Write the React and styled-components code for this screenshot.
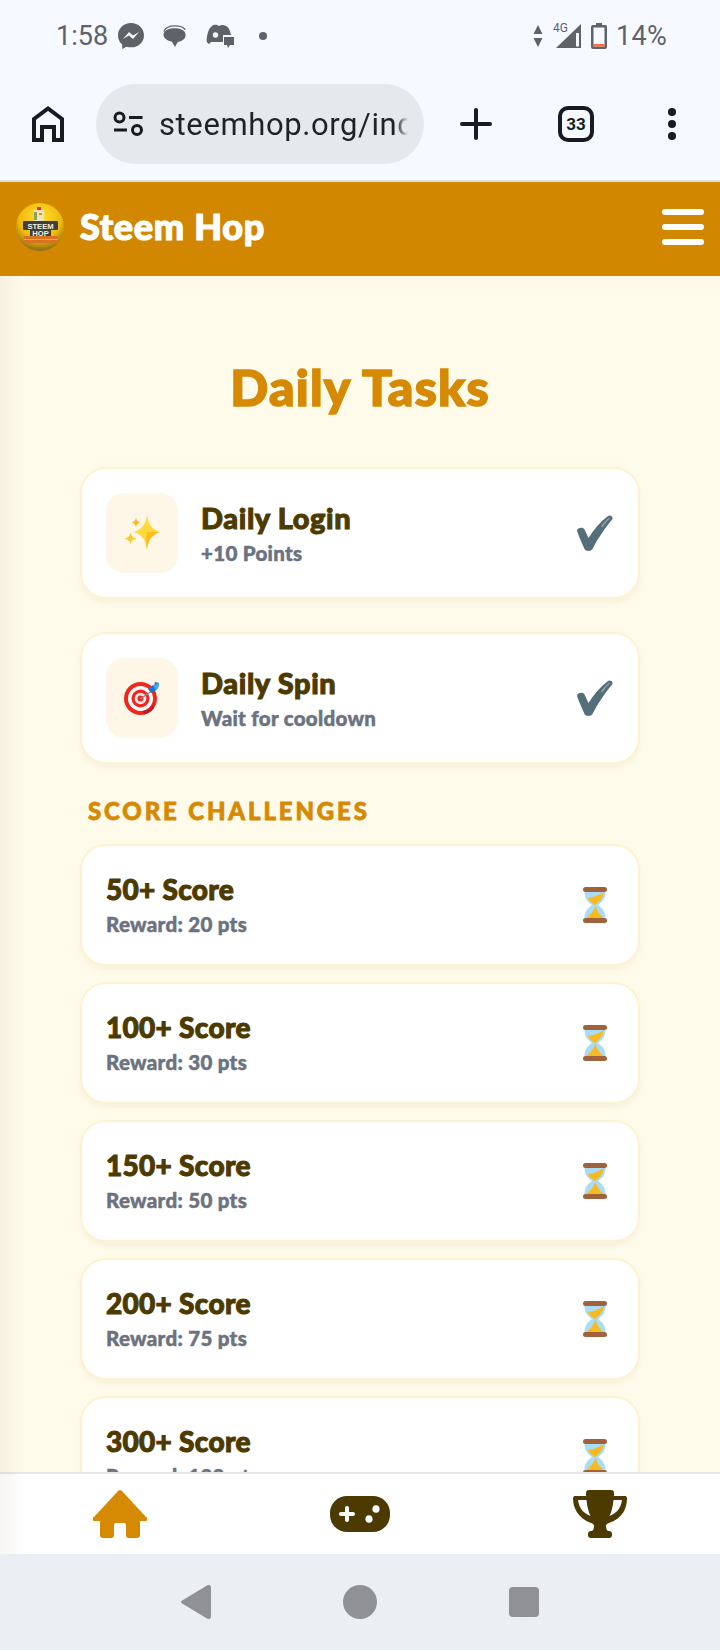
import React from "react";
import styled, { createGlobalStyle } from "styled-components";

const Global = createGlobalStyle`
  html, body { margin: 0; padding: 0; background: #F6F9FF; }
  * { box-sizing: border-box; }
`;

const Phone = styled.div`
  width: 720px; height: 1650px; display: flex; flex-direction: column; overflow: hidden;
  font-family: Lato, "Liberation Sans", sans-serif;
`;
const Chrome = styled.div`
  height: 182px; background: #F6F9FF; border-bottom: 2px solid #DEE1E6; flex: none;
  display: flex; flex-direction: column;
`;
const StatusBar = styled.div`
  height: 72px; padding: 0 53px 0 56px; display: flex; align-items: center; justify-content: space-between;
  color: #5F6368; font: 400 27px Roboto, sans-serif;
`;
const StatusGroup = styled.div`
  display: flex; align-items: center; gap: ${p => p.$gap || 0}px; margin-left: ${p => p.$inset || 0}px;
`;
const Toolbar = styled.div`
  display: flex; align-items: center; height: 80px; margin-top: 12px; padding-left: 32px;
`;
const Pill = styled.div`
  width: 328px; height: 80px; margin-left: 32px; border-radius: 40px; background: #E5E8ED;
  display: flex; align-items: center; padding: 0 16px 0 17px; gap: 14px; flex: none; margin-right: 36px;
`;
const Url = styled.div`
  flex: 1; overflow: hidden; white-space: nowrap; font: 400 31px Roboto, sans-serif; letter-spacing: 0.6px; color: #1F2327;
  -webkit-mask-image: linear-gradient(to right, #000 95%, transparent);
  mask-image: linear-gradient(to right, #000 95%, transparent);
`;
const TabCount = styled.div`
  width: 36px; height: 36px; border: 4px solid #171C20; border-radius: 10px; margin-left: 66px;
  display: flex; align-items: center; justify-content: center;
  font: 700 17px Roboto, sans-serif; color: #171C20;
`;
const Dots = styled.div`
  margin-left: 74px; display: grid; gap: 4px;
  span { width: 8px; height: 8px; border-radius: 50%; background: #171C20; display: block; }
`;
const Header = styled.header`
  height: 94px; flex: none; background: #D18800; display: flex; align-items: center;
  justify-content: space-between; padding: 0 16px 4px 16px;
`;
const Brand = styled.div`display: flex; align-items: center; gap: 16px;`;
const BrandName = styled.div`
  color: #fff; font-size: 36px; font-weight: 900; -webkit-text-stroke: 1.2px #fff; letter-spacing: 0.7px; margin-bottom: 2px;
`;
const Burger = styled.div`
  display: grid; gap: 9px;
  span { display: block; width: 42px; height: 6px; background: #fff; border-radius: 3px; }
`;
const Stage = styled.div`
  position: relative; flex: 1; min-height: 0; display: flex; flex-direction: column;
  &::after {
    content: ""; position: absolute; left: 0; top: 0; bottom: 0; width: 26px; pointer-events: none;
    background: linear-gradient(to right, rgba(90,70,20,.055), rgba(90,70,20,0));
  }
`;
const Main = styled.main`
  flex: 1; min-height: 0; overflow: hidden; background: #FFFBEB; padding: 0 80px;
`;
const Title = styled.h1`
  margin: 81px 0 0; text-align: center; color: #D68A03; font-size: 50px; line-height: 60px; font-weight: 900;
  -webkit-text-stroke: 1.6px #D68A03; letter-spacing: 1.2px;
`;
const Card = styled.div`
  background: #fff; border: 2px solid #FEF3D0; border-radius: 26px;
  box-shadow: 0 4px 6px rgba(120,90,20,.06);
  padding: 0 25px 0 24px; display: flex; align-items: center; justify-content: space-between;
  height: ${p => p.$tall ? 132 : 122}px;
  margin-top: ${p => p.$gap}px;
`;
const Left = styled.div`display: flex; align-items: center; gap: 23px;`;
const IconBox = styled.div`
  width: 72px; height: 80px; border-radius: 18px; background: #FEF7E8;
  display: flex; align-items: center; justify-content: center;
`;
const Texts = styled.div`
  display: flex; flex-direction: column; gap: 3px; margin-top: ${p => p.$lift ? -4 : -2}px;
`;
const Name = styled.div`
  color: #4D3A00; font-size: ${p => p.$compact ? 28 : 29}px; line-height: 38px; font-weight: 900;
  letter-spacing: ${p => p.$compact ? 0.3 : 0.6}px; -webkit-text-stroke: 1px #4D3A00;
`;
const Sub = styled.div`
  color: #6B7280; font-size: 20.5px; line-height: 26px; font-weight: 900; letter-spacing: 0.3px;
  -webkit-text-stroke: 0.5px #6B7280;
`;
const Trail = styled.div`width: 36px; display: flex; justify-content: center;`;
const Section = styled.div`
  margin: 35px 0 0 8px; height: 24px; line-height: 24px; font-size: 24px; font-weight: 900; color: #D68A03;
  letter-spacing: 2.85px; -webkit-text-stroke: 0.8px #D68A03; text-transform: uppercase;
`;
const BottomNav = styled.nav`
  height: 82px; flex: none; background: #fff; border-top: 2px solid #E5E7EB;
  display: grid; grid-template-columns: repeat(3, 1fr); align-items: center; justify-items: center;
`;
const SystemNav = styled.div`
  height: 96px; flex: none; background: #EBEEF3; display: grid;
  grid-template-columns: repeat(3, 164px); justify-content: center; align-items: center; justify-items: center;
`;
const Dot = styled.span`
  width: 8px; height: 8px; border-radius: 50%; background: #5F6368; margin-left: 25px;
`;
const NetBlock = styled.div`
  position: relative; width: 28px; height: 25px; margin: 0 10px; display: flex; justify-content: flex-end;
`;
const NetLabel = styled.span`
  position: absolute; left: 0; top: -3px; font: 400 12px Roboto, sans-serif; color: #5F6368;
`;
const Pct = styled.span`margin-left: 9px; letter-spacing: 0.3px;`;
const Circle = styled.div`width: 34px; height: 34px; border-radius: 50%; background: #8F9194;`;
const Square = styled.div`width: 30px; height: 30px; border-radius: 4px; background: #8F9194;`;
const LogoText = styled.text`
  fill: #F4EFD8; font-family: "Liberation Sans", sans-serif; font-weight: 700; text-anchor: middle; font-size: 7.6px;
`;

const Messenger = () => (
  <svg width="26" height="27" viewBox="0 0 26 27"><path fill="#5F6368" d="M13 0C5.800 0 0 5.400 0 12.400c0 3.700 1.600 6.800 4.200 9V26l4.200-2.300c1.400.4 3 .6 4.600.6 7.200 0 13-5 13-11.900S20.200 0 13 0z"/><path fill="#F6F9FF" d="M5 16l6-7 4 3.500L21 9l-6 7-4-3.500z"/></svg>
);
const Bubbles = () => (
  <svg width="24" height="25" viewBox="0 0 26 25"><path fill="none" stroke="#5F6368" strokeWidth="1.500" d="M1 7C3 2 8 1 13 1c5 0 9 1 11 4"/><path fill="#5F6368" d="M12.500 3.500C18 3.500 24.500 5 24.500 11c0 5-5 7-8.500 7.500L13 24l-3.500-6C5 17 .5 14.500.5 10.500c0-5 6.500-7 12-7z"/></svg>
);
const Discord = () => (
  <svg width="28" height="24" viewBox="0 0 28 24"><path fill="#5F6368" d="M6 2c3-2 5-1 7 0 2-1 4-1.500 7 0 3 1 4 5 5 9h-8v7H5l-2 2c-2-1-3-3-2-7 .5-4 2-9 5-11z"/><circle cx="9.500" cy="11" r="2.700" fill="#F6F9FF"/><path fill="#5F6368" d="M18 13h10v8h-4l-2 3-1-3h-3z"/></svg>
);
const Signal = () => (
  <svg width="25" height="24" viewBox="0 0 25 24"><path fill="#5F6368" d="M25 0v24H0z"/><path fill="#F6F9FF" d="M20 9h3v13.500h-3z"/></svg>
);
const Arrows = () => (
  <svg width="10" height="22" viewBox="0 0 10 22"><path fill="#5F6368" d="M5 0l4.500 9H.5zM5 22L.5 13h9z"/></svg>
);
const Battery = () => (
  <svg width="16" height="26" viewBox="0 0 16 26"><path fill="#5F6368" d="M5 0h6v2h3a2 2 0 0 1 2 2v20a2 2 0 0 1-2 2H2a2 2 0 0 1-2-2V4a2 2 0 0 1 2-2h3z"/><rect x="2.500" y="4.500" width="11" height="19" fill="#F6F9FF"/><rect x="2.500" y="21" width="11" height="2.500" fill="#FF6B35"/></svg>
);
const HomeOutline = () => (
  <svg width="32" height="36" viewBox="0 0 32 36" fill="none" stroke="#171C20" strokeWidth="4"><path d="M2 34V13L16 2.500 30 13v21h-8V21H10v13z"/></svg>
);
const SiteTune = () => (
  <svg width="32" height="26" viewBox="0 0 32 26" fill="none" stroke="#171C20" strokeWidth="3"><circle cx="6.500" cy="6.500" r="4.500"/><path d="M16 6.500h13.500M1 19h13"/><circle cx="24" cy="19" r="4.500"/></svg>
);
const Plus = () => (
  <svg width="32" height="32" viewBox="0 0 32 32" stroke="#171C20" strokeWidth="4" strokeLinecap="round"><path d="M2 16h28M16 2v28"/></svg>
);
const Logo = () => (
  <svg width="48" height="48" viewBox="0 0 48 48">
    <defs><radialGradient id="lg" cx="50%" cy="32%" r="68%"><stop offset="0" stopColor="#FFE033"/><stop offset=".65" stopColor="#F0B90B"/><stop offset="1" stopColor="#8E6A18"/></radialGradient></defs>
    <circle cx="24" cy="24" r="24" fill="url(#lg)"/>
    <rect x="18" y="7" width="10" height="11" fill="#EFE3BC"/><rect x="18" y="9" width="3" height="8" fill="#8FA25A"/><rect x="21" y="4" width="4" height="3" fill="#D9342B"/><rect x="23" y="10" width="3" height="2" fill="#E58A1E"/>
    <rect x="7" y="18" width="35" height="9" rx="1" fill="#3F3F3C"/><rect x="14" y="26" width="21" height="8" fill="#3F3F3C"/>
    <rect x="8" y="33" width="34" height="7" rx="1" fill="#D9741E"/>
    <path d="M8 36.500h34" stroke="#F5A33B" strokeWidth="1"/>
    <LogoText x="24.500" y="25.500">STEEM</LogoText>
    <LogoText x="24.500" y="33">HOP</LogoText>
  </svg>
);
const Sparkles = () => (
  <svg width="36" height="36" viewBox="0 0 36 36">
    <path fill="#FFD93B" d="M23 0c1.500 9 4 13.500 13 17-9 3.500-11.500 8-13 18-1.500-10-4-14.500-13-18 9-3.500 11.500-8 13-17z"/>
    <path fill="#F9B31D" d="M23 35c-1-9-1-15 0-18 3 0 8 0 13 0-9 3.500-11.500 8-13 18z" opacity=".75"/>
    <path fill="#FBB91F" d="M12 2c.4 3.500 1.500 4.800 4.500 5.500-3 .8-4.100 2-4.500 5.500-.4-3.500-1.500-4.700-4.500-5.500 3-.7 4.100-2 4.500-5.500z"/>
    <path fill="#FDC82B" d="M6.500 17c.5 4 2 5.500 6 6.500-4 1-5.500 2.500-6 6.500-.5-4-2-5.500-6-6.500 4-1 5.500-2.500 6-6.500z"/>
  </svg>
);
const Target = () => (
  <svg width="36" height="34" viewBox="0 0 36 34">
    <circle cx="16.500" cy="17.500" r="16.500" fill="#F4261C"/>
    <circle cx="16.500" cy="17.500" r="12.500" fill="#fff"/>
    <circle cx="16.500" cy="17.500" r="9" fill="#F4261C"/>
    <circle cx="16.500" cy="17.500" r="5.800" fill="#F3ECEC"/>
    <circle cx="16.500" cy="17.500" r="3" fill="#F4261C"/>
    <path d="M30 27a16.500 16.500 0 0 1-10 6.500l-1-3.500c5-1 9-3 10.500-7z" fill="#B71C2C"/>
    <path stroke="#78909C" strokeWidth="1.500" d="M16 18l12-8"/>
    <path fill="#1976D2" d="M24 8l5-4 1 1 1-4 4 1-1 5-3 3-4 2z"/>
    <path fill="#42A5F5" d="M30 5l3-3 2 1-1 4-3 2z"/>
  </svg>
);
const Check = () => (
  <svg width="36" height="36" viewBox="0 0 36 36">
    <path fill="#546E7A" d="M0 16c0-3 6-4.500 7.500-1.500L11.500 23C17 14.500 23 7 31 1c2-1.500 5 .5 4.500 3C28 13 20.500 24 15.500 34c-1.500 2.500-7 2.500-8 0C5 28 2 22 0 16z"/>
    <path stroke="#90A4AE" strokeWidth="1.500" strokeLinecap="round" d="M32 3.500c-2.500 2-5 5-7 8"/>
  </svg>
);
const Hourglass = () => (
  <svg width="26" height="36" viewBox="0 0 26 36">
    <path fill="#A9DCF6" d="M2.500 4h21c0 7-2 10-7.500 14 5.500 4 7.500 7 7.500 14h-21c0-7 2-10 7.500-14C4.500 14 2.500 11 2.500 4z"/>
    <path fill="#F9B920" d="M6 11c6-.5 11-3 16-6-1 6-4 9-7.500 12l-1 1h-1C9.500 15.500 7 14 6 11zM13 19l1 1c1 5 5 8 8 12H4c3-4 8-7 9-13z"/>
    <rect x="1" y="0" width="24" height="5" rx="2.500" fill="#A0623B"/><rect x="1" y="31" width="24" height="5" rx="2.500" fill="#A0623B"/>
  </svg>
);
const HouseFill = () => (
  <svg width="54" height="48" viewBox="0 0 54 48">
    <path fill="#D68A03" d="M25 1a3 3 0 0 1 4 0l24 26a2 2 0 0 1-1.500 4H47v14a3 3 0 0 1-3 3h-8a3 3 0 0 1-3-3V35a2 2 0 0 0-2-2h-8a2 2 0 0 0-2 2v10a3 3 0 0 1-3 3h-8a3 3 0 0 1-3-3V31H2.500A2 2 0 0 1 1 27z"/>
  </svg>
);
const Gamepad = () => (
  <svg width="60" height="36" viewBox="0 0 60 36">
    <rect width="60" height="36" rx="17" fill="#4D3A00"/>
    <path stroke="#fff" strokeWidth="4" strokeLinecap="round" d="M11 18h12M17 12v12"/>
    <ellipse cx="46" cy="13" rx="3.600" ry="3.800" fill="#fff"/><ellipse cx="39" cy="23" rx="3.600" ry="3.800" fill="#fff"/>
  </svg>
);
const Trophy = () => (
  <svg width="54" height="48" viewBox="0 0 54 48">
    <path fill="#4D3A00" d="M13 3a3 3 0 0 1 3-3h22a3 3 0 0 1 3 3v3h12l1 2c0 10-4 20-18 25-2 .7-3 1.500-3 3 0 3 1 5 3 5a3 3 0 0 1 3 3v1a3 3 0 0 1-3 3H18a3 3 0 0 1-3-3v-1a3 3 0 0 1 3-3c2 0 3-2 3-5 0-1.500-1-2.300-3-3C5 28 0 18 0 8l1-2h12z"/>
    <path fill="#fff" d="M5 10h8.500c.5 6 2 12 4 16C10 23 6 18 5 10zM40.500 10H49c-1 8-5 13-12.500 16 2-4 3.500-10 4-16z"/>
  </svg>
);
const Back = () => (
  <svg width="30" height="34" viewBox="0 0 30 34"><path fill="#8F9194" d="M26 .5c2-1.500 4 0 4 2v29c0 2-2 3.500-4 2L2 19c-2.500-1-2.500-3 0-4z"/></svg>
);

const challenges = [
  ["50+ Score", "Reward: 20 pts"],
  ["100+ Score", "Reward: 30 pts"],
  ["150+ Score", "Reward: 50 pts"],
  ["200+ Score", "Reward: 75 pts"],
  ["300+ Score", "Reward: 100 pts"],
];

const TaskCard = ({ icon, name, sub, gap }) => (
  <Card $tall $gap={gap}>
    <Left>
      <IconBox>{icon}</IconBox>
      <Texts><Name>{name}</Name><Sub>{sub}</Sub></Texts>
    </Left>
    <Trail><Check /></Trail>
  </Card>
);

export default function App() {
  return (
    <Phone>
      <Global />
      <Chrome>
        <StatusBar>
          <StatusGroup>
            <span>1:58</span>
            <StatusGroup $gap={19} $inset={10}>
              <Messenger /><Bubbles /><Discord />
            </StatusGroup>
            <Dot />
          </StatusGroup>
          <StatusGroup>
            <Arrows />
            <NetBlock><NetLabel>4G</NetLabel><Signal /></NetBlock>
            <Battery />
            <Pct>14%</Pct>
          </StatusGroup>
        </StatusBar>
        <Toolbar>
          <HomeOutline />
          <Pill>
            <SiteTune />
            <Url>steemhop.org/index.html</Url>
          </Pill>
          <Plus />
          <TabCount>33</TabCount>
          <Dots><span /><span /><span /></Dots>
        </Toolbar>
      </Chrome>
      <Header>
        <Brand><Logo /><BrandName>Steem Hop</BrandName></Brand>
        <Burger><span /><span /><span /></Burger>
      </Header>
      <Stage>
        <Main>
          <Title>Daily Tasks</Title>
          <TaskCard gap={50} icon={<Sparkles />} name="Daily Login" sub="+10 Points" />
          <TaskCard gap={33} icon={<Target />} name="Daily Spin" sub="Wait for cooldown" />
          <Section>Score Challenges</Section>
          {challenges.map(([n, s], i) => (
            <Card key={n} $gap={i === 0 ? 21 : 16}>
              <Texts $lift><Name $compact>{n}</Name><Sub>{s}</Sub></Texts>
              <Trail><Hourglass /></Trail>
            </Card>
          ))}
        </Main>
        <BottomNav>
          <HouseFill /><Gamepad /><Trophy />
        </BottomNav>
      </Stage>
      <SystemNav>
        <Back /><Circle /><Square />
      </SystemNav>
    </Phone>
  );
}
